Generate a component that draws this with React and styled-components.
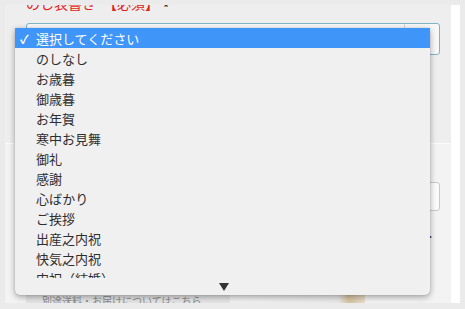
import React from 'react';
import styled, { createGlobalStyle } from 'styled-components';

const Global = createGlobalStyle`
  html, body { margin: 0; padding: 0; }
  body {
    background: #ebebeb;
    font-family: "Noto Sans CJK JP", "Noto Sans", sans-serif;
  }
`;

const options = [
  'のしなし',
  'お歳暮',
  '御歳暮',
  'お年賀',
  '寒中お見舞',
  '御礼',
  '感謝',
  '心ばかり',
  'ご挨拶',
  '出産之内祝',
  '快気之内祝',
  '内祝（結婚）',
  '内祝',
];

const Frame = styled.div`
  width: 465px;
  height: 309px;
  padding: 5px 5px 6px 5px;
  box-sizing: border-box;
`;

const Page = styled.div`
  position: relative;
  height: 298px;
  background: #ffffff;
  display: flex;
  overflow: hidden;
`;

const Content = styled.div`
  width: 446px;
  background: #f3f3f3;
  display: flex;
  flex-direction: column;
`;

const TopSection = styled.div`
  margin-top: -10px;
  height: 148px;
  padding: 0 11px 0 21px;
  background: #eeeeee;
  border-bottom: 1px solid #fbfbfb;
  display: flex;
  flex-direction: column;
`;

const Label = styled.div`
  font-size: 14px;
  line-height: 16px;
  color: #e2231a;
  white-space: nowrap;
`;

const Required = styled.span`
  display: inline-block;
  color: #333;
  margin-left: 4px;
  font-size: 12px;
  font-weight: bold;
  transform: translateY(3px);
`;

const Select = styled.div`
  margin-top: 11px;
  height: 30px;
  border: 1px solid #7fb4c6;
  border-radius: 3px;
  background: #f7f7f7;
  display: flex;
  justify-content: flex-end;
`;

const SelectArrow = styled.div`
  width: 34px;
  border-left: 1px solid #d6d6d6;
`;

const LowerSection = styled.div`
  flex: 1;
  padding: 38px 11px 0 21px;
  display: flex;
  flex-direction: column;
`;

const Input = styled.div`
  align-self: flex-end;
  width: 300px;
  height: 27px;
  border: 1px solid #c9c9c9;
  border-radius: 3px;
  background: #fafafa;
`;

const Note = styled.div`
  margin-top: 16px;
  align-self: flex-end;
  font-size: 11px;
  line-height: 12px;
  font-weight: bold;
  color: #2c3a66;
  margin-right: 8px;
`;

const Bottom = styled.div`
  margin-top: auto;
  width: 339px;
  height: 8px;
  background: #e4e4e4;
  display: flex;
  align-items: flex-start;
  overflow: hidden;
`;

const BottomText = styled.div`
  padding-left: 16px;
  width: 188px;
  font-size: 10px;
  line-height: 12px;
  color: #8a8a8a;
  white-space: nowrap;
  overflow: hidden;
`;

const Thumb = styled.div`
  flex: 1;
  height: 8px;
  background: linear-gradient(90deg, #f2f2f2 0%, #e9e9e9 80%, #d8c3a0 88%, #e8ddc9 100%);
`;

const Scrollbar = styled.div`
  flex: 1;
  background: #ffffff;
`;

const Menu = styled.div`
  position: absolute;
  left: 10px;
  top: 23px;
  width: 415px;
  height: 267px;
  background: #f0f0f0;
  border-radius: 0 0 5px 5px;
  box-shadow: 0 2px 6px rgba(0, 0, 0, 0.35), 0 0 1px rgba(0, 0, 0, 0.25);
  display: flex;
  flex-direction: column;
  overflow: hidden;
`;

const List = styled.div`
  height: 250px;
  overflow: hidden;
  display: flex;
  flex-direction: column;
`;

const Item = styled.div`
  flex: 0 0 20px;
  display: flex;
  align-items: center;
  padding-left: ${p => (p.$selected ? '5px' : '21px')};
  font-size: 13px;
  color: ${p => (p.$selected ? '#ffffff' : '#2e2e2e')};
  background: ${p => (p.$selected ? '#3f95f8' : 'transparent')};
  white-space: nowrap;
`;

const Check = styled.span`
  width: 16px;
  font-size: 12px;
  font-weight: bold;
`;

const ScrollDown = styled.div`
  flex: 1;
  display: flex;
  justify-content: center;
  align-items: center;
  padding-left: 3px;
`;

const Triangle = styled.div`
  width: 0;
  height: 0;
  border-left: 5px solid transparent;
  border-right: 5px solid transparent;
  border-top: 8px solid #333;
`;

export default function App() {
  return (
    <>
      <Global />
      <Frame>
        <Page>
          <Content>
            <TopSection>
              <Label>のし表書き　【必須】<Required>*</Required></Label>
              <Select>
                <SelectArrow />
              </Select>
            </TopSection>
            <LowerSection>
              <Input />
              <Note>.</Note>
              <Bottom>
                <BottomText>別途送料・お届けについてはこちら</BottomText>
                <Thumb />
              </Bottom>
            </LowerSection>
          </Content>
          <Scrollbar />
          <Menu>
            <List>
              <Item $selected>
                <Check>✓</Check>選択してください
              </Item>
              {options.map(o => (
                <Item key={o}>{o}</Item>
              ))}
            </List>
            <ScrollDown>
              <Triangle />
            </ScrollDown>
          </Menu>
        </Page>
      </Frame>
    </>
  );
}
